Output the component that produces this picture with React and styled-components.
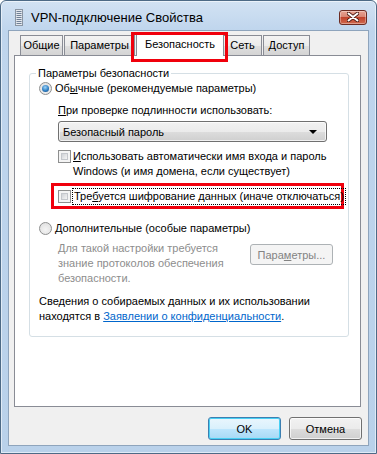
import styled, { createGlobalStyle, css } from "styled-components";

const GlobalStyle = createGlobalStyle`
  html, body {
    margin: 0;
    padding: 0;
    background: #ffffff;
  }
  body {
    font-family: "Liberation Sans", Arial, sans-serif;
    font-size: 11px;
    color: #000;
  }
`;

const Window = styled.div`
  box-sizing: border-box;
  width: 377px;
  height: 454px;
  display: flex;
  flex-direction: column;
  border: 1px solid #4d6a86;
  border-radius: 6px 6px 0 0;
  background: linear-gradient(#d2e2f3 0px, #bfd5ed 30px, #b9d1ea 100%);
  box-shadow: inset 0 0 0 1px rgba(255, 255, 255, 0.55);
`;

const TitleBar = styled.div`
  height: 29px;
  flex: none;
  display: flex;
  align-items: center;
  padding: 3px 9px 0 14px;
  box-sizing: border-box;
`;

const Title = styled.span`
  margin-left: 8px;
  margin-top: 1px;
  font-size: 13px;
  color: #000;
`;

const CloseButton = styled.div`
  margin-left: auto;
  width: 28px;
  height: 15px;
  box-sizing: border-box;
  border: 1px solid #6c2b22;
  border-radius: 3px;
  background: linear-gradient(#e8a493 0%, #d98674 45%, #c1432c 50%, #cf6a4f 100%);
  box-shadow: inset 0 0 0 1px rgba(255, 255, 255, 0.35);
  display: flex;
  align-items: center;
  justify-content: center;
`;

const Client = styled.div`
  flex: 1;
  margin: 0 7px 7px 7px;
  border: 1px solid #8ea4bc;
  background: #f0f0f0;
  display: flex;
  flex-direction: column;
`;

const TabStrip = styled.div`
  display: flex;
  align-items: flex-end;
  height: 25px;
  padding-left: 11px;
  margin-bottom: -1px;
  position: relative;
  z-index: 1;
`;

const Tab = styled.div`
  position: relative;
  box-sizing: border-box;
  width: ${(p) => p.$w}px;
  height: 20px;
  margin-bottom: 1px;
  line-height: 18px;
  text-align: center;
  border: 1px solid #898c95;
  border-bottom: none;
  background: linear-gradient(#f3f3f3 0%, #ebebeb 50%, #dfdfdf 51%, #d4d4d4 100%);
  white-space: nowrap;
  & + & {
    margin-left: 1px;
  }
  ${(p) =>
    p.$active &&
    css`
      height: 23px;
      margin: 0 -2px 0 -2px;
      line-height: 21px;
      background: #ffffff;
      z-index: 2;
      && {
        margin-left: -2px;
      }
    `}
`;

const Highlight = styled.span`
  position: absolute;
  left: -6px;
  right: -5px;
  top: -2px;
  bottom: -6px;
  border: 3px solid #f0000c;
  pointer-events: none;
`;

const Panel = styled.div`
  height: 352px;
  box-sizing: border-box;
  margin: 0 7px 0 5px;
  border: 1px solid #898c95;
  background: #ffffff;
  padding: 10px 11px 0 14px;
`;

const Group = styled.fieldset`
  margin: 0;
  padding: 0 10px 12px 9px;
  border: 1px solid #d5dfe5;
  border-radius: 3px;
  min-width: 0;
`;

const Legend = styled.legend`
  padding: 0 2px;
  margin-left: -3px;
  line-height: 15px;
`;

const Row = styled.div`
  display: flex;
  align-items: ${(p) => (p.$top ? "flex-start" : "center")};
  line-height: 15px;
  margin-top: ${(p) => p.$mt || 0}px;
  margin-left: ${(p) => p.$ml || 0}px;
`;

const Text = styled.div`
  line-height: 15px;
  margin-top: ${(p) => p.$mt || 0}px;
  margin-left: ${(p) => p.$ml || 0}px;
  color: ${(p) => (p.$muted ? "#8d8d8d" : "#000")};
`;

const RadioBox = styled.span`
  flex: none;
  width: 13px;
  height: 13px;
  box-sizing: border-box;
  border-radius: 50%;
  border: 1px solid #8e8f8f;
  background: radial-gradient(circle at 50% 60%, #f4f4f4 0%, #dcdcdc 100%);
  display: flex;
  align-items: center;
  justify-content: center;
  margin-right: 3px;
  &::after {
    content: "";
    display: ${(p) => (p.$checked ? "block" : "none")};
    width: 7px;
    height: 7px;
    border-radius: 50%;
    background: radial-gradient(circle at 45% 35%, #9fd4f7 0%, #2f7fc4 55%, #0f3f74 100%);
  }
`;

const CheckBox = styled.span`
  flex: none;
  width: 13px;
  height: 13px;
  box-sizing: border-box;
  border: 1px solid #8e8f8f;
  background: #f4f4f4;
  padding: 2px;
  margin-top: ${(p) => p.$mt || 0}px;
  margin-right: 2px;
  &::after {
    content: "";
    display: block;
    width: 100%;
    height: 100%;
    box-sizing: border-box;
    border: 1px solid #c4c7cc;
    background: linear-gradient(135deg, #cfd2d6 0%, #f5f5f5 100%);
  }
`;

const Select = styled.div`
  margin: 3px 0 0 19px;
  width: 269px;
  height: 21px;
  box-sizing: border-box;
  border: 1px solid #707070;
  border-radius: 3px;
  background: linear-gradient(#f2f2f2 0%, #ebebeb 50%, #dddddd 51%, #cfcfcf 100%);
  box-shadow: inset 0 0 0 1px rgba(255, 255, 255, 0.7);
  display: flex;
  align-items: center;
  padding: 0 9px 0 4px;
`;

const Arrow = styled.span`
  margin-left: auto;
  width: 0;
  height: 0;
  border-left: 4px solid transparent;
  border-right: 4px solid transparent;
  border-top: 4px solid #000;
`;

const Marked = styled.div`
  margin: 4px -6px 0 12px;
  border: 3px solid #f0000c;
  padding: 3px 4px 2px;
  display: flex;
  align-items: center;
  line-height: 15px;
`;

const Focus = styled.span`
  outline: 1px dotted #000;
  outline-offset: 0;
  padding: 0 1px;
  white-space: nowrap;
`;

const Extra = styled.div`
  display: flex;
  align-items: flex-start;
  margin: 5px 5px 0 19px;
`;

const SmallButton = styled.div`
  margin-left: auto;
  margin-top: 3px;
  width: 83px;
  height: 21px;
  box-sizing: border-box;
  border: 1px solid #adb2b5;
  border-radius: 3px;
  background: #f4f4f4;
  color: #838383;
  display: flex;
  align-items: center;
  justify-content: center;
`;

const Link = styled.span`
  color: #0066cc;
  text-decoration: underline;
`;

const ButtonRow = styled.div`
  display: flex;
  justify-content: flex-end;
  gap: 8px;
  margin: 10px 6px 0 0;
`;

const Button = styled.div`
  width: 73px;
  height: 23px;
  box-sizing: border-box;
  border: 1px solid ${(p) => (p.$default ? "#3c7fb1" : "#707070")};
  border-radius: 3px;
  background: ${(p) =>
    p.$default
      ? "linear-gradient(#eaf6fd 0%, #d9f0fc 50%, #bee6fd 51%, #a7d9f5 100%)"
      : "linear-gradient(#f2f2f2 0%, #ebebeb 50%, #dddddd 51%, #cfcfcf 100%)"};
  box-shadow: inset 0 0 0 1px ${(p) => (p.$default ? "#48d0f4" : "rgba(255,255,255,0.7)")};
  display: flex;
  align-items: center;
  justify-content: center;
`;

const AppIcon = () => (
  <svg width="8" height="17" viewBox="0 0 8 17">
    <rect x="0.5" y="0.5" width="7" height="16" fill="#e4e8ee" stroke="#8a95a3" />
    {[2, 4, 6, 8, 10, 12, 14].map((y) => (
      <rect key={y} x="1.5" y={y} width="5" height="1" fill="#6f8096" />
    ))}
  </svg>
);

const CloseGlyph = () => (
  <svg width="12" height="10" viewBox="0 0 12 10">
    <path
      d="M1.5 1.5 L10.5 8.5 M10.5 1.5 L1.5 8.5"
      stroke="#4a1a12"
      strokeWidth="3.6"
      strokeLinecap="round"
    />
    <path
      d="M1.5 1.5 L10.5 8.5 M10.5 1.5 L1.5 8.5"
      stroke="#ffffff"
      strokeWidth="2"
      strokeLinecap="round"
    />
  </svg>
);

export default function App() {
  return (
    <>
      <GlobalStyle />
      <Window>
        <TitleBar>
          <AppIcon />
          <Title>VPN-подключение Свойства</Title>
          <CloseButton>
            <CloseGlyph />
          </CloseButton>
        </TitleBar>
        <Client>
          <TabStrip>
            <Tab $w={43}>Общие</Tab>
            <Tab $w={71}>Параметры</Tab>
            <Tab $w={88} $active>
              Безопасность
              <Highlight />
            </Tab>
            <Tab $w={39}>Сеть</Tab>
            <Tab $w={47}>Доступ</Tab>
          </TabStrip>
          <Panel>
            <Group>
              <Legend>Параметры безопасности</Legend>
              <Row>
                <RadioBox $checked />
                <span>
                  Об<u>ы</u>чные (рекомендуемые параметры)
                </span>
              </Row>
              <Text $mt={7} $ml={19}>
                <u>П</u>ри проверке подлинности использовать:
              </Text>
              <Select>
                <span>Безопасный пароль</span>
                <Arrow />
              </Select>
              <Row $top $mt={7} $ml={19}>
                <CheckBox $mt={1} />
                <span>
                  <u>И</u>спользовать автоматически имя входа и пароль
                  <br />
                  Windows (и имя домена, если существует)
                </span>
              </Row>
              <Marked>
                <CheckBox />
                <Focus>
                  Тре<u>б</u>уется шифрование данных (иначе отключаться)
                </Focus>
              </Marked>
              <Row $mt={12}>
                <RadioBox />
                <span>
                  <u>Д</u>ополнительные (особые параметры)
                </span>
              </Row>
              <Extra>
                <Text $muted>
                  Для такой настройки требуется
                  <br />
                  знание протоколов обеспечения
                  <br />
                  безопасности.
                </Text>
                <SmallButton>
                  <span>
                    Пара<u>м</u>етры...
                  </span>
                </SmallButton>
              </Extra>
              <Text $mt={8}>
                Сведения о собираемых данных и их использовании
                <br />
                находятся в <Link>Заявлении о конфиденциальности</Link>.
              </Text>
            </Group>
          </Panel>
          <ButtonRow>
            <Button $default>OK</Button>
            <Button>Отмена</Button>
          </ButtonRow>
        </Client>
      </Window>
    </>
  );
}
